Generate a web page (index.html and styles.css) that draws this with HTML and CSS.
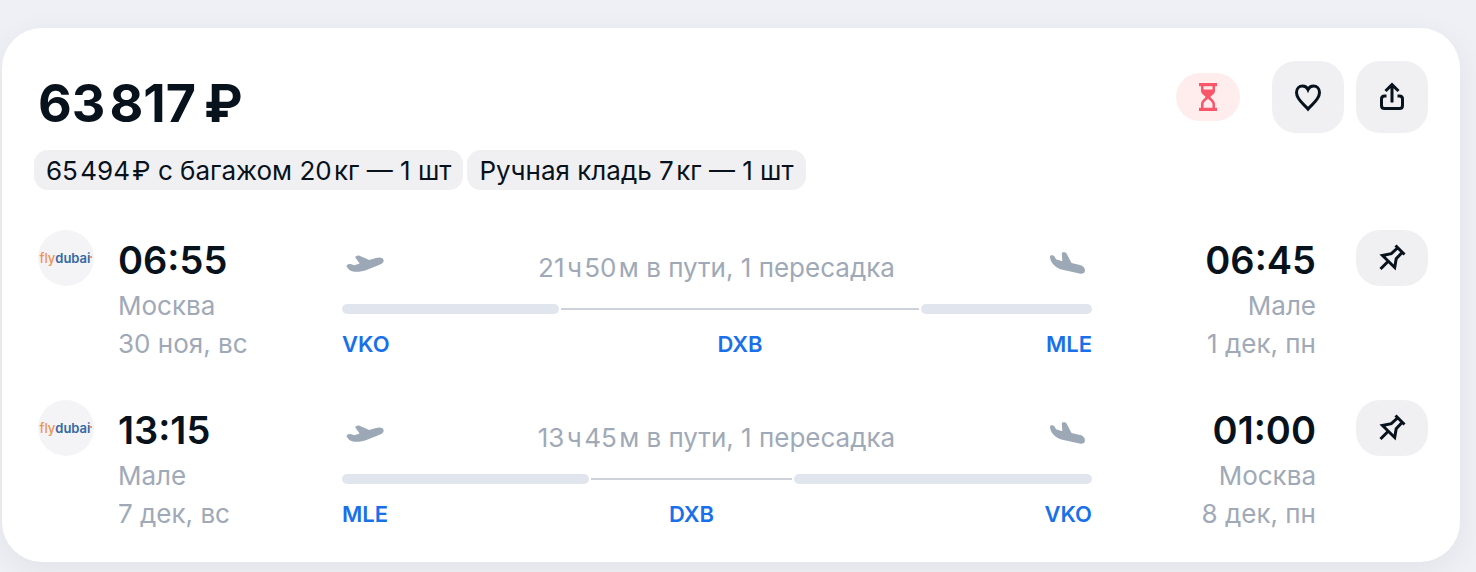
FILE: index.html
```
<!DOCTYPE html>
<html lang="ru">
<head>
<meta charset="utf-8">
<meta name="viewport" content="width=device-width, initial-scale=1">
<title>Билет Москва — Мале</title>
<link rel="stylesheet" href="styles.css">
</head>
<body>
<svg class="sprite" aria-hidden="true">
  <symbol id="takeoff" viewBox="0 0 40 24">
    <path d="M1.600 13.400C1 12.200 3.400 10.500 5.600 11L9.300 12.200L14.600 10.500L10.300 4.400C9.800 3.500 12.600 2 14 2.600L24.200 7L31 5C34.500 4 37.700 4.300 38.500 6.800C39.200 9.200 37.200 10.800 34.600 11.800L21.500 17C15 19.600 6.500 19.400 3.900 16.500Z"/>
  </symbol>
  <symbol id="landing" viewBox="0 0 40 26">
    <path d="M2 4.500Q2 3.300 3.500 3.300C5.200 3.300 6.300 3.800 6.800 5L8 7.200L14.300 9.200L13.800 1.600Q13.800 .3 15.500 .3C17 .3 18 .6 18.700 1.800L23.500 11L32 13C35.200 13.800 37.300 16 36.900 18.800C36.500 21.700 34.500 22.200 31.400 21.600L14.500 17.800C7 16 2 10 2 4.500Z"/>
  </symbol>
  <symbol id="pin" viewBox="0 0 32 32">
    <path d="M19.500 3.500L28.500 12.500M21.500 6L15.300 11.700L6.500 13.500L18.700 25.500L20.200 16.800L26 10.500M12.500 19L4.500 27"/>
  </symbol>
</svg>

<main class="ticket">
  <header class="summary">
    <h1 class="price">63&#8202;817&#8201;₽</h1>
    <div class="actions">
      <span class="badge" role="img" aria-label="Скоро закончится">
        <svg class="hourglass" viewBox="0 0 20 28">
          <path d="M1 0H19V3.200H17V8C17 11 12.500 13 12.500 14C12.500 15 17 17.500 17 21V24.800H19V28H1V24.800H3V21C3 17.500 7.500 15 7.500 14C7.500 13 3 11 3 8V3.200H1ZM5.500 3.200V6.500H14.500V3.200ZM10 15.500C8.500 17.500 5.500 19 5.500 21.500V24.800H14.500V21.500C14.500 19 11.500 17.500 10 15.500Z" fill-rule="evenodd"/>
        </svg>
      </span>
      <button class="action" type="button" aria-label="В избранное">
        <svg class="icon" viewBox="0 0 32 32">
          <path d="M16 28C12.500 23.500 4.500 18.800 4.500 11.500C4.500 7.500 7.300 5 10.500 5C13 5 15 6.400 16 8.600C17 6.400 19 5 21.500 5C24.700 5 27.500 7.500 27.500 11.500C27.500 18.800 19.500 23.500 16 28Z"/>
        </svg>
      </button>
      <button class="action" type="button" aria-label="Поделиться">
        <svg class="icon" viewBox="0 0 32 32">
          <path d="M16 21.500V4.500M9.500 10L16 3.700L22.500 10M10.500 15H8.500Q5.500 15 5.500 18V24.500Q5.500 27.500 8.500 27.500H23.500Q26.500 27.500 26.500 24.500V18Q26.500 15 23.500 15H21.500"/>
        </svg>
      </button>
    </div>
  </header>

  <ul class="baggage">
    <li class="chip">65&#8202;494&#8202;₽ с багажом 20&#8202;кг — 1 шт</li>
    <li class="chip">Ручная кладь 7&#8202;кг — 1 шт</li>
  </ul>

  <section class="leg">
    <div class="airline"><span class="fly">fly</span><span class="dubai">dubai</span><span class="dot"></span></div>
    <div class="point">
      <p class="time">06:55</p>
      <p class="info">Москва</p>
      <p class="info">30 ноя, вс</p>
    </div>
    <div class="route">
      <div class="route-top">
        <svg class="plane" aria-hidden="true"><use href="#takeoff"/></svg>
        <p class="duration">21&#8202;ч&#8202;50&#8202;м в пути, 1 пересадка</p>
        <svg class="plane" aria-hidden="true"><use href="#landing"/></svg>
      </div>
      <div class="track" style="grid-template-columns: 217fr 358fr 171fr">
        <span class="flight"></span><span class="layover"></span><span class="flight"></span>
        <a class="code" href="#vko">VKO</a><a class="code" href="#dxb">DXB</a><a class="code" href="#mle">MLE</a>
      </div>
    </div>
    <div class="point arrival">
      <p class="time">06:45</p>
      <p class="info">Мале</p>
      <p class="info">1 дек, пн</p>
    </div>
    <button class="action pin" type="button" aria-label="Закрепить рейс туда"><svg class="icon"><use href="#pin"/></svg></button>
  </section>

  <section class="leg">
    <div class="airline"><span class="fly">fly</span><span class="dubai">dubai</span><span class="dot"></span></div>
    <div class="point">
      <p class="time">13:15</p>
      <p class="info">Мале</p>
      <p class="info">7 дек, вс</p>
    </div>
    <div class="route">
      <div class="route-top">
        <svg class="plane" aria-hidden="true"><use href="#takeoff"/></svg>
        <p class="duration">13&#8202;ч&#8202;45&#8202;м в пути, 1 пересадка</p>
        <svg class="plane" aria-hidden="true"><use href="#landing"/></svg>
      </div>
      <div class="track" style="grid-template-columns: 247fr 201fr 298fr">
        <span class="flight"></span><span class="layover"></span><span class="flight"></span>
        <a class="code" href="#mle">MLE</a><a class="code" href="#dxb">DXB</a><a class="code" href="#vko">VKO</a>
      </div>
    </div>
    <div class="point arrival">
      <p class="time">01:00</p>
      <p class="info">Москва</p>
      <p class="info">8 дек, пн</p>
    </div>
    <button class="action pin" type="button" aria-label="Закрепить рейс обратно"><svg class="icon"><use href="#pin"/></svg></button>
  </section>
</main>
</body>
</html>
```
FILE: styles.css
```
* {
  box-sizing: border-box;
}

body {
  margin: 0;
  padding: 28px 16px 10px 2px;
  background: #eff0f5;
  color: #08121c;
  font-family: Inter, "Liberation Sans", sans-serif;
  font-size: 26px;
  line-height: 38px;
}

h1, p, ul {
  margin: 0;
  padding: 0;
}

.sprite {
  position: absolute;
  width: 0;
  height: 0;
}

.ticket {
  padding: 33px 32px 29px 36px;
  background: #fff;
  border-radius: 40px;
  box-shadow: 0 8px 32px rgba(0, 0, 0, 0.06);
}

.summary {
  display: flex;
  justify-content: space-between;
  align-items: flex-start;
}

.price {
  padding-top: 11px;
  font-size: 52px;
  line-height: 64px;
  font-weight: 700;
}

.actions {
  display: flex;
  align-items: center;
  gap: 12px;
}

.badge {
  display: flex;
  align-items: center;
  justify-content: center;
  width: 64px;
  height: 48px;
  margin-right: 20px;
  border-radius: 24px;
  background: #ffedee;
}

.hourglass {
  width: 20px;
  height: 28px;
  fill: #f9566a;
}

.action {
  display: flex;
  align-items: center;
  justify-content: center;
  width: 72px;
  height: 72px;
  padding: 0;
  border: 0;
  border-radius: 24px;
  background: #f0f0f3;
  color: inherit;
  cursor: pointer;
}

.icon {
  width: 32px;
  height: 32px;
  fill: none;
  stroke: currentColor;
  stroke-width: 3;
}

.baggage {
  display: flex;
  gap: 4px;
  margin: 14px 0 40px -4px;
  list-style: none;
}

.chip {
  padding: 2px 12px 0;
  border-radius: 14px;
  background: #f0f0f3;
}

.leg {
  display: grid;
  grid-template-columns: 56px 200px 1fr 264px 72px;
  align-items: start;
}

.leg + .leg {
  margin-top: 37px;
}

.airline {
  display: flex;
  align-items: center;
  justify-content: center;
  height: 56px;
  border-radius: 28px;
  background: #f4f4f6;
  font-size: 13px;
  line-height: 16px;
}

.fly {
  color: #ee9255;
  font-weight: 500;
}

.dubai {
  color: #3568a5;
  font-weight: 600;
}

.dot {
  width: 2px;
  height: 2px;
  margin-bottom: 3px;
  border-radius: 1px;
  background: #ee7a3a;
}

.point {
  padding: 2px 0 0 24px;
}

.arrival {
  padding: 2px 40px 0 0;
  text-align: right;
}

.time {
  margin-bottom: -1px;
  font-size: 38px;
  line-height: 56px;
  font-weight: 600;
}

.info,
.duration {
  color: #a0a9b7;
}

.route {
  padding: 19px 0 0 48px;
}

.route-top {
  display: flex;
  justify-content: space-between;
  margin-bottom: 17px;
  padding: 0 4px 0 3px;
}

.plane {
  width: 40px;
  height: 26px;
  margin-top: 3px;
  fill: #9da8b6;
}

.track {
  display: grid;
  column-gap: 2px;
  align-items: center;
}

.flight {
  height: 10px;
  border-radius: 5px;
  background: #e1e5ee;
}

.layover {
  height: 2px;
  background: #cdd2da;
}

.code {
  padding-top: 14px;
  color: #1a70ea;
  font-size: 22px;
  line-height: 32px;
  font-weight: 600;
  text-align: center;
  text-decoration: none;
}

.code:first-of-type {
  text-align: left;
}

.code:last-of-type {
  text-align: right;
}

.pin {
  height: 56px;
}
```
